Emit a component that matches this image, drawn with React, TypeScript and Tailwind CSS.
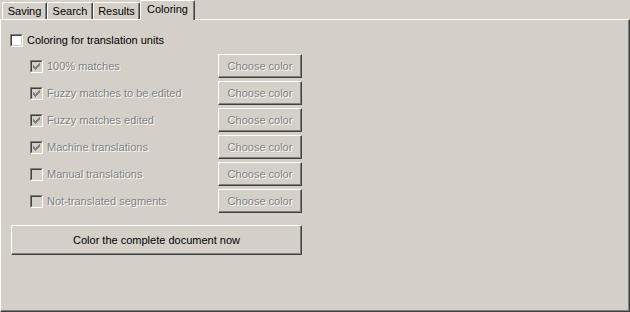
import React from "react"

const ROWS = [
  { label: "100% matches", checked: true },
  { label: "Fuzzy matches to be edited", checked: true },
  { label: "Fuzzy matches edited", checked: true },
  { label: "Machine translations", checked: true },
  { label: "Manual translations", checked: false },
  { label: "Not-translated segments", checked: false },
]

const GRAY_TEXT = "text-[#808080] [text-shadow:1px_1px_0_#ffffff]"

function Check({ color }: { color: string }) {
  // classic 7x7 check mark, drawn pixel by pixel
  const px = [
    [6, 0], [5, 1], [6, 1], [0, 2], [4, 2], [5, 2], [6, 2],
    [0, 3], [1, 3], [3, 3], [4, 3], [5, 3], [0, 4], [1, 4], [2, 4], [3, 4], [4, 4],
    [1, 5], [2, 5], [3, 5], [2, 6],
  ]
  return (
    <svg width="7" height="7" viewBox="0 0 7 7" shapeRendering="crispEdges" className="block">
      {px.map(([x, y]) => (
        <rect key={`${x}-${y}`} x={x} y={y} width="1" height="1" fill={color} />
      ))}
    </svg>
  )
}

function CheckBox({ checked, disabled }: { checked?: boolean; disabled?: boolean }) {
  return (
    <div className="w-[13px] h-[13px] shrink-0 flex border border-t-[#808080] border-l-[#808080] border-r-white border-b-white">
      <div
        className={`flex-1 flex items-center justify-center border border-t-[#404040] border-l-[#404040] border-r-[#d4d0c8] border-b-[#d4d0c8] ${
          disabled ? "bg-[#d4d0c8]" : "bg-white"
        }`}
      >
        {checked && <Check color={disabled ? "#808080" : "#000000"} />}
      </div>
    </div>
  )
}

function Button({ children, disabled, className }: { children: React.ReactNode; disabled?: boolean; className?: string }) {
  return (
    <div
      className={`flex items-center justify-center border border-t-white border-l-white border-r-[#404040] border-b-[#404040] shadow-[inset_-1px_-1px_0_#808080] ${
        disabled ? GRAY_TEXT : "text-black"
      } ${className ?? ""}`}
    >
      {children}
    </div>
  )
}

function Tab({ label, active, className }: { label: string; active?: boolean; className?: string }) {
  if (active) {
    return (
      <div
        className={`relative z-10 h-[20px] -mb-[1px] bg-[#d4d0c8] flex justify-center pt-[2px] border-t border-l border-r border-t-white border-l-white border-r-[#404040] shadow-[inset_-1px_0_0_#808080] rounded-tl-[2px] rounded-tr-[2px] ${className ?? ""}`}
      >
        {label}
      </div>
    )
  }
  return (
    <div
      className={`h-[17px] flex justify-center pt-[2px] border-t border-l border-r border-t-white border-l-white border-r-[#404040] shadow-[inset_-1px_0_0_#808080] rounded-tl-[2px] rounded-tr-[2px] ${className ?? ""}`}
    >
      {label}
    </div>
  )
}

export default function App() {
  return (
    <div className="w-[630px] h-[312px] bg-[#d4d0c8] flex flex-col font-['Liberation_Sans',Arial,sans-serif] text-[11px] leading-[13px] text-black select-none">
      {/* tab strip */}
      <div className="h-[19px] flex items-end pl-[2px]">
        <Tab label="Saving" className="w-[45px]" />
        <Tab label="Search" className="w-[46px]" />
        <Tab label="Results" className="w-[47px]" />
        <Tab label="Coloring" active className="w-[55px]" />
      </div>

      {/* page */}
      <div className="flex-1 flex flex-col pl-[9px] pt-[14px] border border-t-white border-l-white border-r-[#404040] border-b-[#404040] shadow-[inset_-1px_-1px_0_#808080]">
        <div className="flex items-center gap-[4px] h-[13px]">
          <CheckBox />
          <span>Coloring for translation units</span>
        </div>

        <div className="mt-[7px] ml-[20px] flex flex-col gap-[3px]">
          {ROWS.map((r) => (
            <div key={r.label} className="flex items-center h-[24px]">
              <div className="w-[188px] flex items-center gap-[4px]">
                <CheckBox checked={r.checked} disabled />
                <span className={GRAY_TEXT}>{r.label}</span>
              </div>
              <Button disabled className="w-[84px] h-[24px]">
                Choose color
              </Button>
            </div>
          ))}
        </div>

        <Button className="mt-[12px] ml-[1px] w-[291px] h-[30px]">Color the complete document now</Button>
      </div>
    </div>
  )
}
